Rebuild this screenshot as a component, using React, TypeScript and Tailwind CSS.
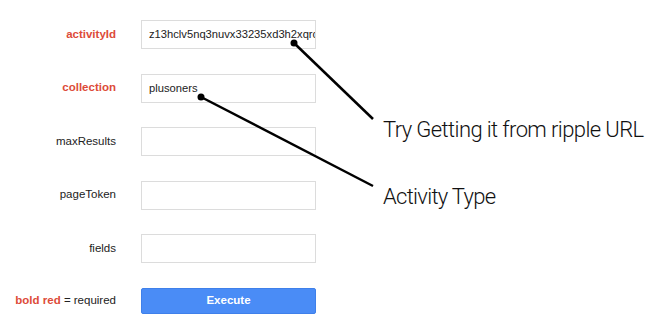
const fields = [
  { name: "activityId", required: true, value: "z13hclv5nq3nuvx33235xd3h2xqrc" },
  { name: "collection", required: true, value: "plusoners" },
  { name: "maxResults", required: false, value: "" },
  { name: "pageToken", required: false, value: "" },
  { name: "fields", required: false, value: "" },
];

function Row({ name, required, value }: { name: string; required: boolean; value: string }) {
  return (
    <div className="flex items-center gap-[25px]">
      <div
        className={
          "w-[116px] text-right text-[11.5px] " +
          (required ? "font-bold text-[#dd4b39]" : "text-[#222]")
        }
      >
        {name}
      </div>
      <div className="h-[29px] w-[175px] overflow-hidden whitespace-nowrap border border-[#dcdcdc] bg-white pl-[7px] text-[11.2px] leading-[27px] text-[#222]">
        {value}
      </div>
    </div>
  );
}

export default function App() {
  return (
    <div className="relative h-[335px] w-[655px] overflow-hidden bg-white font-['Liberation_Sans',Arial,sans-serif]">
      <div className="flex flex-col gap-[24.5px] pt-[20px]">
        {fields.map((f) => (
          <Row key={f.name} {...f} />
        ))}
        <div className="flex items-center gap-[25px]">
          <div className="w-[116px] text-right text-[11.5px] text-[#222]">
            <span className="font-bold text-[#dd4b39]">bold red</span> = required
          </div>
          <button className="h-[26px] w-[175px] rounded-[2px] border border-[#3f80ea] bg-[#4a8cf6] text-[11.5px] font-bold text-white">
            Execute
          </button>
        </div>
      </div>

      {/* annotation layer */}
      <svg className="absolute left-0 top-0" width="655" height="335">
        <line x1="294" y1="43" x2="373" y2="119" stroke="#000" strokeWidth="2.5" />
        <circle cx="294" cy="43" r="3.5" fill="#000" />
        <line x1="201" y1="97" x2="373" y2="186" stroke="#000" strokeWidth="2.5" />
        <circle cx="201" cy="97" r="3.5" fill="#000" />
      </svg>
      <div className="absolute left-[383px] top-[113px] whitespace-nowrap font-['Roboto',sans-serif] text-[22px] font-light tracking-[-0.6px] text-[#111]">
        Try Getting it from ripple URL
      </div>
      <div className="absolute left-[383px] top-[180px] whitespace-nowrap font-['Roboto',sans-serif] text-[22px] font-light tracking-[-0.7px] text-[#111]">
        Activity Type
      </div>
    </div>
  );
}
